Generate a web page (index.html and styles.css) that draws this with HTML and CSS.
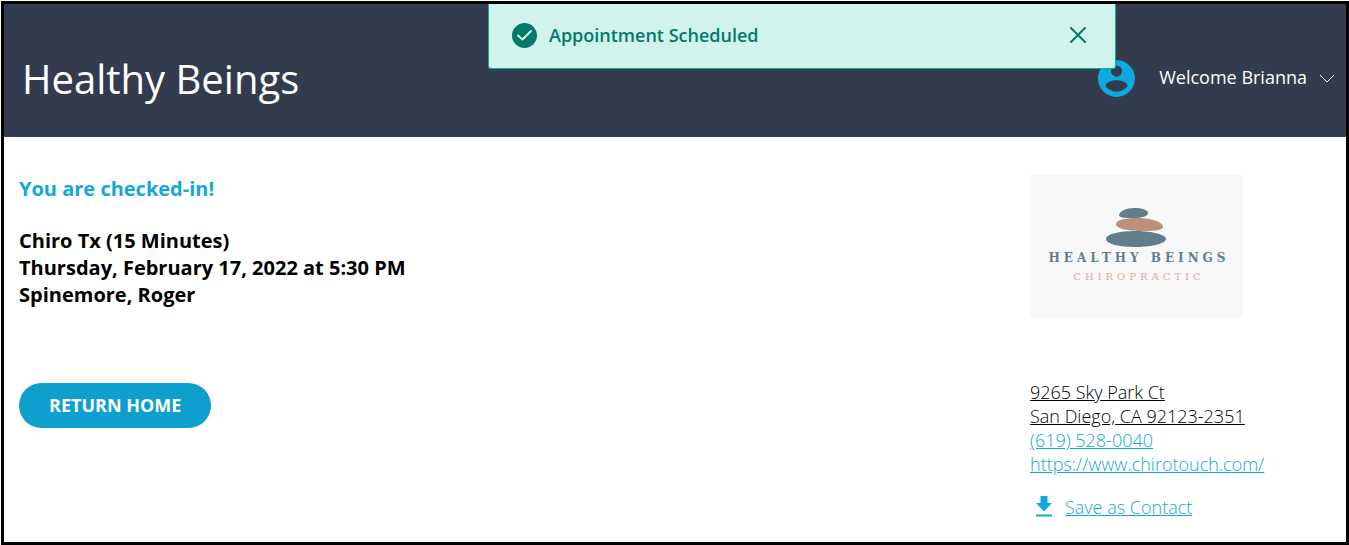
FILE: index.html
```html
<!DOCTYPE html>
<html lang="en">
<head>
<meta charset="utf-8">
<title>Healthy Beings</title>
<link rel="stylesheet" href="styles.css">
</head>
<body>
<div class="frame">
  <header class="header">
    <h1 class="brand">Healthy Beings</h1>
    <button class="account" type="button">
      <svg class="avatar" viewBox="2 2 20 20" aria-hidden="true"><path fill="currentColor" d="M12 2C6.48 2 2 6.48 2 12s4.48 10 10 10 10-4.480 10-10S17.520 2 12 2zm0 3c1.660 0 3 1.340 3 3s-1.340 3-3 3-3-1.340-3-3 1.340-3 3-3zm0 14.200c-2.500 0-4.710-1.280-6-3.220.030-1.990 4-3.080 6-3.080s5.970 1.090 6 3.080c-1.290 1.940-3.500 3.220-6 3.220z"/></svg>
      <span class="greeting">Welcome Brianna</span>
      <svg class="chevron" viewBox="0 0 16 10" aria-hidden="true"><path d="M1 1l7 7 7-7" fill="none" stroke="currentColor"/></svg>
    </button>
    <div class="toast" role="status">
      <svg class="toast-icon" viewBox="0 0 25 25" aria-hidden="true"><circle cx="12.500" cy="12.500" r="12.500" fill="currentColor"/><path d="M6 12.500l4.500 4 8.500-8.500" fill="none" stroke="#d2f2ec" stroke-width="2" stroke-linecap="round" stroke-linejoin="round"/></svg>
      <span class="toast-text">Appointment Scheduled</span>
      <button class="toast-close" type="button" aria-label="Close"><svg viewBox="0 0 16 16" aria-hidden="true"><path d="M1 1l14 14M15 1L1 15" stroke="currentColor" stroke-width="2" stroke-linecap="round"/></svg></button>
    </div>
  </header>
  <main class="content">
    <section class="visit">
      <h2 class="status">You are checked-in!</h2>
      <p class="details">Chiro Tx (15 Minutes)<br>Thursday, February 17, 2022 at 5:30 PM<br>Spinemore, Roger</p>
      <button class="home" type="button">RETURN HOME</button>
    </section>
    <aside class="clinic">
      <svg class="logo" viewBox="0 0 213 142" role="img" aria-label="Healthy Beings Chiropractic">
        <rect width="213" height="142" fill="#f8f8f8"/>
        <path fill="#617e8b" d="M89 40c1-4 7-7 15-7 8 0 14 2 14 5 0 3-6 5-14 5-8 0-15 0-15-3z"/>
        <path fill="#bd907c" d="M86 49c0-4 9-6 21-6 14 0 26 4 26 9 0 3-8 4-20 4-14 0-27-2-27-7z"/>
        <path fill="#617e8b" d="M76 64c0-5 13-8 30-8s30 4 30 8-13 8-30 8-30-3-30-8z"/>
        <text class="logo-name" x="109" y="87">HEALTHY BEINGS</text>
        <text class="logo-sub" x="109" y="105">CHIROPRACTIC</text>
      </svg>
      <address class="contact">
        <a class="place" href="#map">9265 Sky Park Ct<br>San Diego, CA 92123-2351</a>
        <a href="tel:+16195280040">(619) 528-0040</a>
        <a href="https://www.chirotouch.com/">https://www.chirotouch.com/</a>
      </address>
      <div class="save">
        <svg viewBox="0 0 18 22" aria-hidden="true"><path fill="currentColor" d="M5.500 0h7v7H17l-8 8.500L1 7h4.500zM1 18.500h16v2H1z"/></svg>
        <a href="#contact">Save as Contact</a>
      </div>
    </aside>
  </main>
</div>
</body>
</html>
```
FILE: styles.css
```css
* {
  box-sizing: border-box;
}

body {
  margin: 0;
  padding: 1px 0 0 1px;
  background: #fff;
  color: #000;
  font-family: "Open Sans", "Noto Sans", sans-serif;
}

button {
  padding: 0;
  border: 0;
  background: none;
  color: inherit;
  font: inherit;
  cursor: pointer;
}

svg {
  display: block;
}

.frame {
  min-height: calc(100vh - 1px);
  border: 3px solid #000;
}

.header {
  position: relative;
  display: flex;
  align-items: center;
  justify-content: space-between;
  padding: 47px 11px 31px 18px;
  background: #323c4e;
  color: #fff;
}

.brand {
  margin: 0;
  font-size: 40px;
  font-weight: 400;
  line-height: 55px;
}

.account {
  display: flex;
  align-items: center;
  font-size: 18px;
  line-height: 24px;
}

.avatar {
  width: 37px;
  height: 37px;
  margin-right: 24px;
  color: #0ea9df;
}

.greeting {
  padding-bottom: 4px;
}

.chevron {
  width: 16px;
  height: 10px;
  margin-left: 12px;
}

.toast {
  position: absolute;
  top: 0;
  left: 50%;
  display: flex;
  align-items: center;
  width: 628px;
  height: 65px;
  margin-left: -187px;
  padding: 0 29px 2px 23px;
  border: 1px solid #00b399;
  border-top: 0;
  border-radius: 0 0 3px 3px;
  background: #d2f2ec;
  color: #007a69;
}

.toast-icon {
  width: 25px;
  height: 25px;
}

.toast-text {
  flex: 1;
  margin-left: 12px;
  font-size: 18px;
  font-weight: 600;
}

.toast-close svg {
  width: 16px;
  height: 16px;
}

.content {
  display: grid;
  grid-template-columns: 1fr 316px;
  padding: 38px 0 20px 15px;
}

.status {
  margin: 0 0 25px;
  color: #14a7da;
  font-size: 20px;
  font-weight: 700;
  line-height: 27px;
}

.details {
  margin: 0 0 75px;
  font-size: 20px;
  font-weight: 700;
  line-height: 27px;
}

.home {
  padding: 0 30px;
  border-radius: 23px;
  background: #0d9fcd;
  color: #fff;
  font-size: 18px;
  font-weight: 700;
  line-height: 45px;
}

.logo {
  width: 213px;
  height: 142px;
}

.logo-name,
.logo-sub {
  font-family: "DejaVu Serif", serif;
  text-anchor: middle;
}

.logo-name {
  fill: #617e8b;
  font-size: 12px;
  font-weight: 700;
  letter-spacing: 4px;
}

.logo-sub {
  fill: #d4b0a2;
  font-size: 10px;
  letter-spacing: 4px;
}

.contact {
  display: flex;
  flex-direction: column;
  align-items: flex-start;
  margin-top: 63px;
  font-size: 18px;
  font-style: normal;
  font-weight: 300;
  line-height: 24px;
}

a {
  color: #14a7da;
}

.place {
  color: #000;
}

.save {
  display: flex;
  align-items: center;
  gap: 12px;
  margin-top: 18px;
  padding-left: 5px;
  color: #0ea9df;
  font-size: 18px;
  font-weight: 300;
  line-height: 26px;
}

.save svg {
  width: 18px;
  height: 22px;
}
```
